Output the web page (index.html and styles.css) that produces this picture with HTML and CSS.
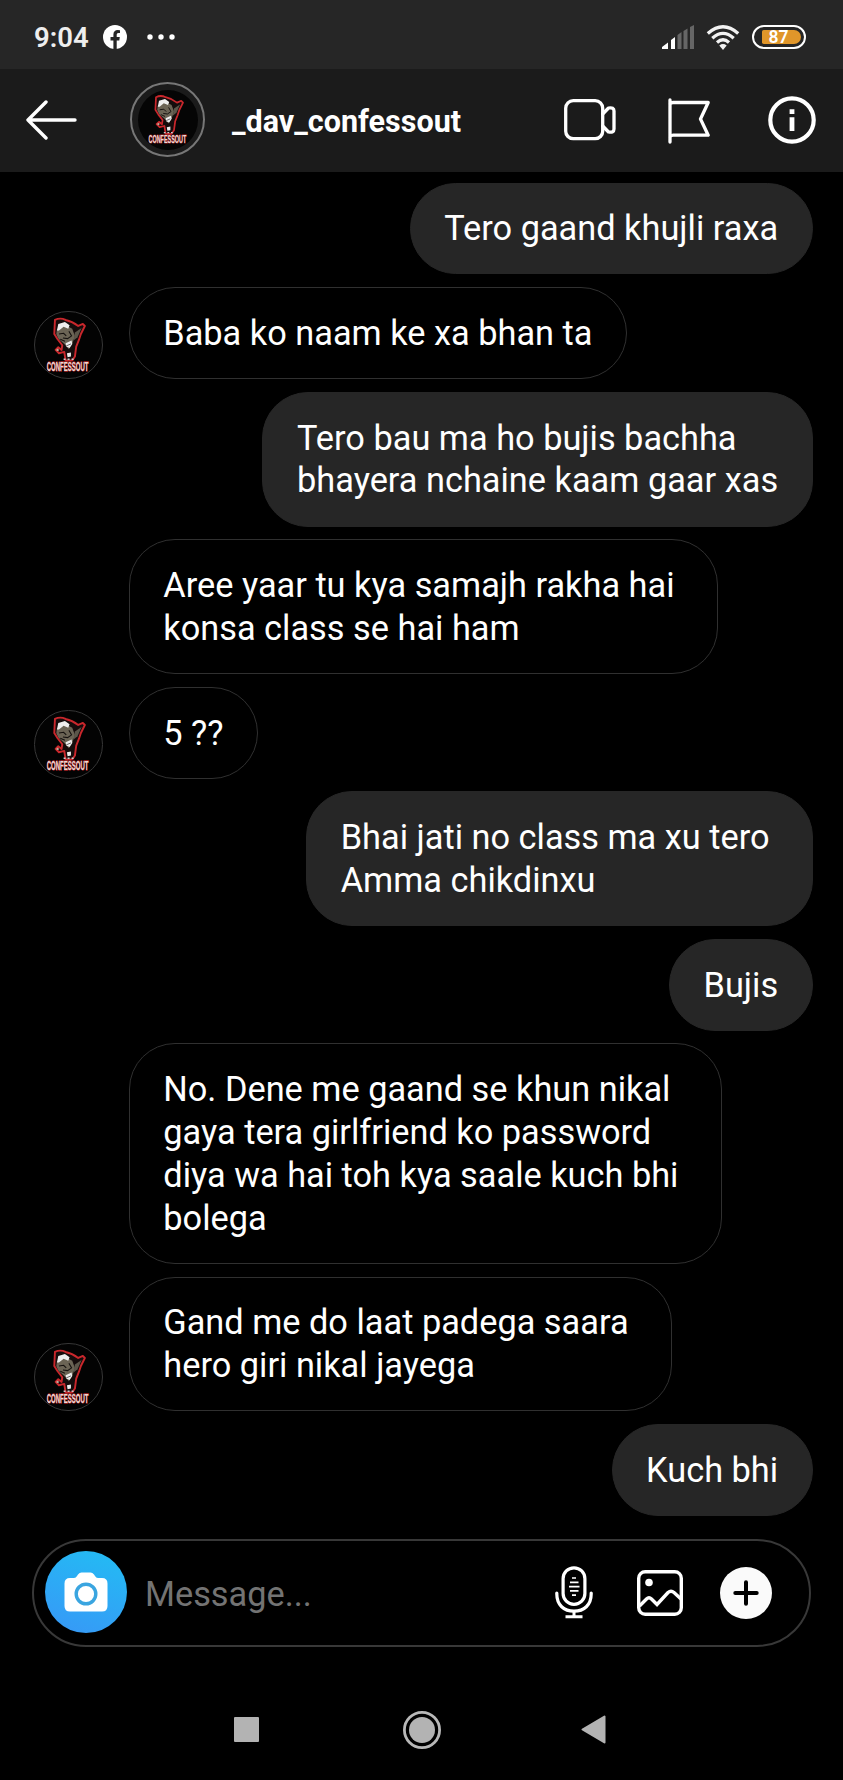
FILE: index.html
```
<!DOCTYPE html>
<html lang="en">
<head>
<meta charset="utf-8">
<title>_dav_confessout</title>
<link rel="stylesheet" href="styles.css">
</head>
<body>
<svg width="100" height="100" class="defs">
  <symbol id="logo" viewBox="0 0 100 100">
    <path d="M30 12Q38 8 46 12Q56 14 65 21L72 18L75 21L69 33L66 42L62 52L60 67L56 73H46L44 60L36 62L31 57L35 53L40 57L41 50L34 41L29 33Z" fill="#150c0c" stroke="#c9272c" stroke-width="2.9" stroke-linejoin="round"/>
    <path d="M33 26L45 19L56 25L60 36L56 48L51 56L44 48L35 40L32 33Z" fill="#6b6455"/>
    <path d="M60 31L70 24L64 38L58 43Z" fill="#5c564a"/>
    <path d="M33 28L35 18L45 15L52 20L50 25L43 22L36 28Z" fill="#eee"/>
    <path d="M36 33L43 32L47 36M51 29L55 36L49 40L42 39M38 41L45 44" fill="none" stroke="#15110f" stroke-width="1.6"/>
    <path d="M46 47L55 43L56 48L52 54L47 52Z" fill="#eee"/>
    <path d="M47 51L54 48" stroke="#222"/>
    <circle cx="34" cy="57" r="1.8" fill="#c8a595"/>
    <path d="M48 62L54 61L54 67L49 68Z" fill="#eee"/>
    <path d="M43 71H46M49 71H52M55 71H58" stroke="#ccc" stroke-width="2"/>
    <text x="17.5" y="88" textLength="63" lengthAdjust="spacingAndGlyphs" class="logo-text">CONFESSOUT</text>
  </symbol>
</svg>
<div class="status">
  <span class="clock">9:04</span>
  <svg class="fb" viewBox="0 0 24 24"><circle cx="12" cy="12" r="12" fill="#fff"/><path d="M10.4 24V15.5H7.5V12H10.4V9.5C10.4 6.5 12.1 5 14.8 5L17 5.2V8.1H15.5C14.1 8.1 13.7 9 13.7 9.9V12H16.8L16.3 15.5H13.7V24Z" fill="#262626"/></svg>
  <svg class="dots" viewBox="0 0 28 6"><circle cx="3" cy="3" r="2.7"/><circle cx="14" cy="3" r="2.7"/><circle cx="25" cy="3" r="2.7"/></svg>
  <svg class="signal" viewBox="0 0 32 24"><path d="M0 24V22L6 17.5V24ZM9 24V15L13 12V24Z" fill="#fff"/><path d="M15.5 24V10L19.5 7V24ZM21.5 24V6L25.5 3.5V24ZM28 24V2L32 0V24Z" fill="#666"/></svg>
  <svg class="wifi" viewBox="0 0 34 25"><path d="M1.8 8.5Q17-5 32.2 8.5M6.3 13.2Q17 3.5 27.7 13.2M11 17.4Q17 12.2 23 17.4" fill="none" stroke="#f2f2f2" stroke-width="3.3"/><path d="M13.3 20.5Q17 17.6 20.7 20.5L17 25Z" fill="#f2f2f2"/></svg>
  <div class="battery"><span class="level">87</span></div>
</div>
<header class="top">
  <svg class="back" viewBox="0 0 52 40"><path d="M49 20H2M20 2L2 20L20 38" fill="none" stroke="#fff" stroke-width="3.4" stroke-linecap="round" stroke-linejoin="round"/></svg>
  <div class="ring"><svg class="ring-logo"><use href="#logo"/></svg></div>
  <h1 class="name">_dav_confessout</h1>
  <svg class="video" viewBox="0 0 52 42"><rect x="1.7" y="1.7" width="37" height="38" rx="7.5"/><path d="M38.7 15L44.5 9Q50 8 50 12V30Q50 34 44.5 33L38.7 27"/></svg>
  <svg class="flag" viewBox="0 0 42 46"><path d="M2 2V44M2 6Q3 4.5 5 4.5H40.2L32.5 21L40.2 37.2H5Q3 37.2 2 39"/></svg>
  <svg class="info" viewBox="0 0 48 48"><circle cx="24" cy="24" r="21.7" fill="none" stroke="#fff" stroke-width="4.2"/><path d="M21.6 13.2H26.4V18H21.6ZM21.6 21.2H26.4V35H21.6Z" fill="#fff"/></svg>
</header>
<main class="chat">
  <div class="row out"><p class="bubble">Tero gaand khujli raxa</p></div>
  <div class="row"><svg class="avatar"><use href="#logo"/></svg><p class="bubble">Baba ko naam ke xa bhan ta</p></div>
  <div class="row out"><p class="bubble">Tero bau ma ho bujis bachha 
bhayera nchaine kaam gaar xas</p></div>
  <div class="row cont"><p class="bubble">Aree yaar tu kya samajh rakha hai 
konsa class se hai ham</p></div>
  <div class="row"><svg class="avatar"><use href="#logo"/></svg><p class="bubble">5 ??</p></div>
  <div class="row out"><p class="bubble">Bhai jati no class ma xu tero 
Amma chikdinxu</p></div>
  <div class="row out"><p class="bubble">Bujis</p></div>
  <div class="row cont"><p class="bubble">No. Dene me gaand se khun nikal 
gaya tera girlfriend ko password 
diya wa hai toh kya saale kuch bhi 
bolega</p></div>
  <div class="row"><svg class="avatar"><use href="#logo"/></svg><p class="bubble">Gand me do laat padega saara 
hero giri nikal jayega</p></div>
  <div class="row out"><p class="bubble">Kuch bhi</p></div>
</main>
<div class="composer">
  <div class="camera"><svg class="camera-icon" viewBox="0 0 44 40"><path d="M6 6H10Q12 6 13 4L14 2.5Q15.5.5 17.5.5H26.5Q28.5.5 30 2.5L31 4Q32 6 34 6H38Q43.5 6 43.5 11.5V34Q43.5 39.5 38 39.5H6Q.5 39.5.5 34V11.5Q.5 6 6 6Z" fill="#fff"/><circle cx="22" cy="22" r="9.8" fill="none" stroke="#3aa5e0" stroke-width="3.4"/></svg></div>
  <span class="placeholder">Message...</span>
  <svg class="mic" viewBox="0 0 38 53"><g fill="none" stroke="#fff" stroke-width="3.2"><rect x="8.1" y="1.8" width="21.8" height="36.5" rx="10.9"/><path d="M1.8 27V28C1.8 39 9 45.2 19 45.2S36.2 39 36.2 28V27" stroke-linecap="round"/><path d="M19 45V51M10.5 50.8H27.5" stroke-width="3"/></g><path d="M17 12H21M15 16.3H23.5M14 20.6H24.5M15 24.9H23.5M17 29.2H21" stroke="#fff" stroke-width="1.7"/></svg>
  <svg class="photo" viewBox="0 0 46 46"><rect x="1.7" y="1.7" width="42.6" height="42.6" rx="6.5"/><path d="M2.5 36L9.5 29Q12 26.5 14.5 29L20 34.5L31 22.5Q34 20 37 22.5L44 29"/><circle cx="12" cy="12.5" r="3.8" class="sun"/></svg>
  <svg class="plus" viewBox="0 0 52 52"><circle cx="26" cy="26" r="26" fill="#fafafa"/><path d="M15.3 26H36.7M26 15.3V36.7" stroke="#000" stroke-width="4" stroke-linecap="round"/></svg>
</div>
<nav class="nav">
  <svg class="recent" viewBox="0 0 25 25"><rect width="25" height="25" rx="1" fill="#b3b3b3"/></svg>
  <svg class="home" viewBox="0 0 38 38"><circle cx="19" cy="19" r="17.6" fill="none" stroke="#b8b8b8" stroke-width="2.8"/><circle cx="19" cy="19" r="13" fill="#b3b3b3"/></svg>
  <svg class="prev" viewBox="0 0 25 29"><path d="M1.5 14.5L23.5 1.5V27.5Z" fill="#b3b3b3" stroke="#b3b3b3" stroke-width="2" stroke-linejoin="round"/></svg>
</nav>
</body>
</html>
```
FILE: styles.css
```
* { box-sizing: border-box; }
body { margin: 0; width: 843px; height: 1780px; overflow: hidden; background: #000; color: #fff; font-family: Roboto, sans-serif; }
svg { display: block; flex: none; }
.defs { position: absolute; }
.logo-text { font: 700 19px "Liberation Sans", sans-serif; fill: #eadbd5; stroke: #a82226; stroke-width: 2px; paint-order: stroke; }

.status { display: flex; align-items: center; height: 69px; padding: 5px 37px 0 34px; background: #262626; }
.clock { width: 69px; font-size: 27.5px; font-weight: 600; color: #eee; white-space: nowrap; }
.fb { width: 24px; height: 24px; }
.dots { width: 28px; height: 6px; margin-left: 20px; fill: #fff; }
.signal { width: 32px; height: 24px; margin-left: auto; }
.wifi { width: 34px; height: 25px; margin-left: 12px; }
.battery { width: 54px; height: 24px; margin-left: 12px; padding: 3px; border: 2px solid #fff; border-radius: 12px; }
.level { display: block; height: 14px; margin-left: 5px; padding-right: 6px; border-radius: 2px 8px 8px 2px; background: #e0962a; font-size: 17.5px; line-height: 14.5px; font-weight: 600; text-align: center; }

.top { display: flex; align-items: center; height: 103px; padding: 0 27px 0 26px; background: #1b1b1b; }
.back { width: 52px; height: 40px; margin-top: -2px; }
.ring { display: grid; place-items: center; width: 75px; height: 75px; margin: -2px 0 0 52px; border: 2px solid #777; border-radius: 50%; }
.ring-logo { width: 60px; height: 60px; border-radius: 50%; background: #050505; }
.name { margin: 3px auto 0 27px; font-size: 30.5px; line-height: 40px; font-weight: 700; }
.video, .flag { fill: none; stroke: #fff; stroke-width: 3.3; stroke-linecap: round; stroke-linejoin: round; }
.video { width: 52px; height: 42px; margin-top: -1px; }
.flag { width: 42px; height: 46px; margin: 0 0 0 52px; }
.info { width: 48px; height: 48px; margin: -1px 0 0 58px; }

.chat { display: flex; flex-direction: column; gap: 12.7px; height: 1366.5px; padding: 10.6px 30.3px 0 34.2px; }
.row { display: flex; align-items: flex-end; gap: 26px; }
.out { justify-content: flex-end; }
.cont { padding-left: 94.5px; }
.avatar { width: 68.5px; height: 68.5px; border: 1px solid #363636; border-radius: 50%; background: #030303; }
.bubble { margin: 0; padding: 23.8px 33.6px 23.2px; border: 1px solid #303030; border-radius: 46px; font-size: 34.35px; line-height: 42.9px; white-space: pre; }
.out .bubble { background: #262626; border-color: #262626; }

.composer { display: flex; align-items: center; height: 108px; margin: 0 32px; padding: 0 37px 0 11px; border: 2px solid #383838; border-radius: 54px; }
.camera { display: grid; place-items: center; width: 82px; height: 82px; margin-top: -1px; border-radius: 50%; background: linear-gradient(200deg, #22bdf3, #3897f7); }
.camera-icon { width: 44px; height: 40px; }
.placeholder { margin: 3px auto 0 18px; font-size: 34.3px; color: #737373; }
.mic { width: 38px; height: 53px; }
.photo { width: 46px; height: 46px; margin-left: 44px; fill: none; stroke: #fff; stroke-width: 3.4; }
.sun { fill: #fff; stroke: none; }
.plus { width: 52px; height: 52px; margin-left: 37px; }

.nav { display: flex; align-items: center; justify-content: space-between; height: 38px; margin: 64px 237px 0 234px; }
.recent { width: 25px; height: 25px; }
.home { width: 38px; height: 38px; margin-left: 3px; }
.prev { width: 25px; height: 29px; }
```
